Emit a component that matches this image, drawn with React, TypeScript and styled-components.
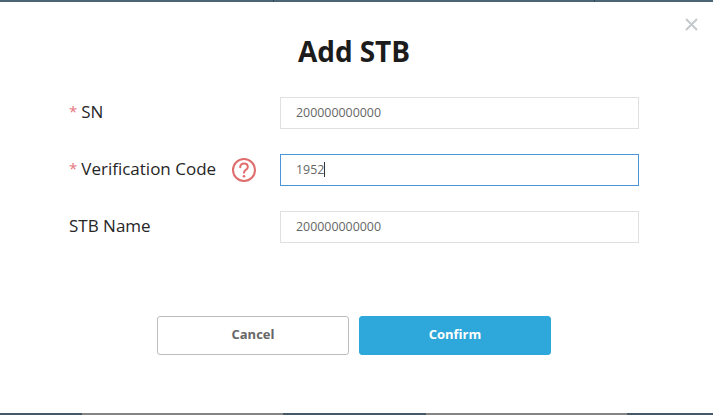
import styled, { createGlobalStyle } from "styled-components";

const GlobalStyle = createGlobalStyle`
  html, body {
    margin: 0;
    padding: 0;
    height: 100%;
    background: #fff;
    font-family: "Open Sans", "Liberation Sans", sans-serif;
  }
  #root {
    height: 100%;
  }
`;

const Page = styled.div`
  width: 713px;
  height: 415px;
  display: flex;
  flex-direction: column;
  overflow: hidden;
`;

const TopStrip = styled.div`
  height: 2px;
  flex: none;
  display: grid;
  grid-template-columns: 273px 320px 1fr;
  gap: 1px;
  background: #2f4350;
`;

const TopSegment = styled.div`
  background: #4a6675;
`;

const BottomStrip = styled.div`
  height: 2px;
  flex: none;
  display: flex;
`;

const BottomSegment = styled.div<{ $w: number; $dark: boolean }>`
  width: ${(p) => p.$w}px;
  background: ${(p) => (p.$dark ? "#45596a" : "#858585")};
`;

const Dialog = styled.div`
  position: relative;
  flex: 1;
  background: #fff;
  display: flex;
  flex-direction: column;
  align-items: center;
  padding-right: 5px;
`;

const Close = styled.div`
  position: absolute;
  top: 16px;
  right: 15px;
  width: 13px;
  height: 13px;
  color: #c4c9cd;
  display: flex;
`;

const Title = styled.h1`
  margin: 31px 0 0;
  height: 36px;
  font-size: 28px;
  line-height: 36px;
  font-weight: 700;
  color: #1c1c1c;
  letter-spacing: -0.1px;
`;

const Form = styled.div`
  margin-top: 28px;
  width: 570px;
  display: flex;
  flex-direction: column;
  gap: 25px;
`;

const Row = styled.div`
  display: grid;
  grid-template-columns: 211px 359px;
  align-items: center;
`;

const Label = styled.div`
  display: flex;
  align-items: center;
  font-size: 17px;
  color: #262626;
  position: relative;
  top: -2px;
`;

const Star = styled.span`
  color: #e8737b;
  margin-right: 4px;
  font-size: 15px;
`;

const Help = styled.svg`
  width: 26px;
  height: 26px;
  margin: 3px 0 0 15px;
  color: #e06c6c;
`;

const Field = styled.div<{ $focus?: boolean }>`
  height: 32px;
  box-sizing: border-box;
  border: 1px solid ${(p) => (p.$focus ? "#4a94d8" : "#e0e0e0")};
  padding: 0 0 2px 15px;
  display: flex;
  align-items: center;
  font-size: 12.4px;
  color: #666;
`;

const Caret = styled.span`
  width: 1px;
  height: 15px;
  background: #333;
`;

const Actions = styled.div`
  margin-top: 73px;
  display: flex;
  gap: 10px;
`;

const Button = styled.button<{ $primary?: boolean }>`
  width: 192px;
  height: 39px;
  box-sizing: border-box;
  border-radius: 3px;
  border: 1px solid ${(p) => (p.$primary ? "#2ea7da" : "#bdbdbd")};
  background: ${(p) => (p.$primary ? "#2ea7da" : "#fff")};
  color: ${(p) => (p.$primary ? "#fff" : "#666")};
  font-family: inherit;
  font-size: 13px;
  font-weight: 700;
  padding: 0 0 4px;
`;

const bottomSegments = [
  { w: 82, dark: true },
  { w: 201, dark: false },
  { w: 143, dark: true },
  { w: 201, dark: false },
  { w: 86, dark: true },
];

export default function App() {
  return (
    <Page>
      <GlobalStyle />
      <TopStrip>
        <TopSegment />
        <TopSegment />
        <TopSegment />
      </TopStrip>
      <Dialog>
        <Close>
          <svg viewBox="0 0 13 13" width="13" height="13" fill="none" stroke="currentColor" strokeWidth="2">
            <path d="M1 1l11 11M12 1L1 12" />
          </svg>
        </Close>
        <Title>Add STB</Title>
        <Form>
          <Row>
            <Label>
              <Star>*</Star>SN
            </Label>
            <Field>200000000000</Field>
          </Row>
          <Row>
            <Label>
              <Star>*</Star>Verification Code
              <Help viewBox="0 0 26 26" fill="none" stroke="currentColor">
                <circle cx="13" cy="13" r="11" strokeWidth="2" />
                <path d="M9.2 10.2c0-2.2 1.7-3.6 3.8-3.6s3.8 1.3 3.8 3.3c0 1.5-.9 2.3-2 3-1.2.8-1.8 1.4-1.8 2.9" strokeWidth="2" strokeLinecap="round" />
                <circle cx="13" cy="19.3" r="1.3" fill="currentColor" stroke="none" />
              </Help>
            </Label>
            <Field $focus>
              1952
              <Caret />
            </Field>
          </Row>
          <Row>
            <Label>STB Name</Label>
            <Field>200000000000</Field>
          </Row>
        </Form>
        <Actions>
          <Button>Cancel</Button>
          <Button $primary>Confirm</Button>
        </Actions>
      </Dialog>
      <BottomStrip>
        {bottomSegments.map((s, i) => (
          <BottomSegment key={i} $w={s.w} $dark={s.dark} />
        ))}
      </BottomStrip>
    </Page>
  );
}
